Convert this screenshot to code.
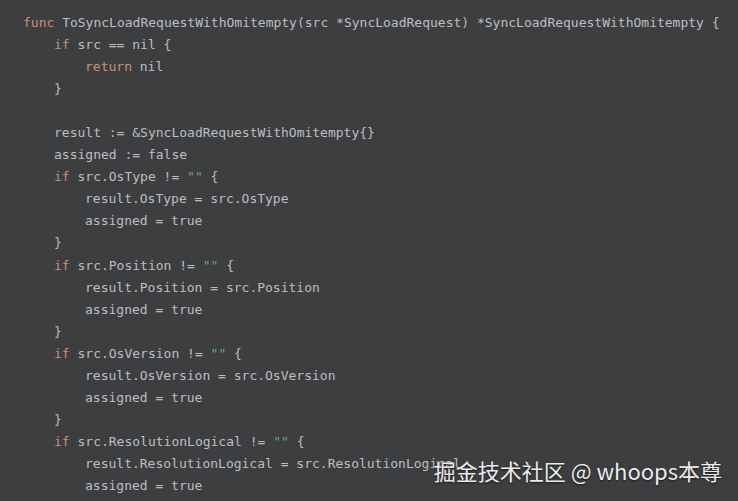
import React from 'react';

const K = ({ children }) => <span className="text-[#cf8e6d]">{children}</span>;
const S = ({ children }) => <span className="text-[#6aab73]">{children}</span>;

const block = (field) => [
  [1, <><K>if</K> src.{field} != <S>""</S> {'{'}</>],
  [2, <>result.{field} = src.{field}</>],
  [2, <>assigned = true</>],
  [1, <>{'}'}</>],
];

const lines = [
  [0, <><K>func</K> ToSyncLoadRequestWithOmitempty(src *SyncLoadRequest) *SyncLoadRequestWithOmitempty {'{'}</>],
  [1, <><K>if</K> src == nil {'{'}</>],
  [2, <><K>return</K> nil</>],
  [1, <>{'}'}</>],
  [0, <>&nbsp;</>],
  [1, <>result := &amp;SyncLoadRequestWithOmitempty{'{}'}</>],
  [1, <>assigned := false</>],
  ...block('OsType'),
  ...block('Position'),
  ...block('OsVersion'),
  ...block('ResolutionLogical'),
];

export default function App() {
  return (
    <div className="relative w-[738px] h-[501px] overflow-hidden bg-[#3c3e3f]">
      <div className="pt-[12px] pl-[23px] font-['DejaVu_Sans_Mono','Liberation_Mono',monospace] text-[13px] leading-[22.05px] text-[#bcbec4] whitespace-pre">
        {lines.map(([indent, content], i) => (
          <div key={i} className={indent === 0 ? '' : indent === 1 ? 'pl-[31px]' : 'pl-[62px]'}>
            {content}
          </div>
        ))}
      </div>
      <div className="absolute right-[16px] top-[455px] font-['Noto_Sans_CJK_SC','Noto_Sans',sans-serif] text-[22px] leading-[30px] text-[#ececec] [text-shadow:0_1px_2px_rgba(0,0,0,0.6)]">
        掘金技术社区 @ whoops本尊
      </div>
    </div>
  );
}
